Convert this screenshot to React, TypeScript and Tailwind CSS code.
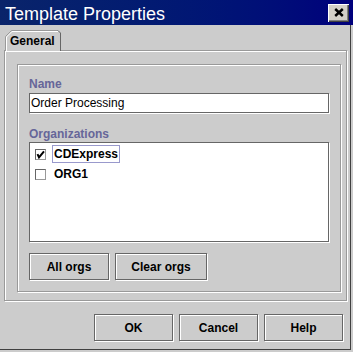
import type { ReactNode } from 'react';

function MetalButton({ children, className }: { children: ReactNode; className: string }) {
  return (
    <button
      className={`h-[27px] bg-[#cccccc] border border-[#666666] shadow-[inset_1px_1px_0_#fff,1px_1px_0_#fff] text-[12px] leading-none font-bold text-black ${className}`}
    >
      {children}
    </button>
  );
}

function Checkbox({ checked }: { checked?: boolean }) {
  return (
    <span className="w-[11px] h-[11px] shrink-0 bg-white border-t border-l border-[#666666] border-r border-b border-r-[#999999] border-b-[#999999] flex items-center justify-center">
      {checked && (
        <svg width="9" height="9" viewBox="0 0 9 9">
          <path d="M1.5 4.2 L3 7.4 L8 1.3" fill="none" stroke="#000" strokeWidth="2" />
        </svg>
      )}
    </span>
  );
}

function OrgRow({ name, checked, focused }: { name: string; checked?: boolean; focused?: boolean }) {
  return (
    <div className="h-[20px] flex items-center">
      <Checkbox checked={checked} />
      <span
        className={`ml-[6px] h-[18px] px-[1px] flex items-center border text-[12px] font-bold text-black ${
          focused ? 'border-[#9999cc]' : 'border-transparent'
        }`}
      >
        {name}
      </span>
    </div>
  );
}

export default function App() {
  return (
    <div className="w-[353px] h-[352px] bg-[#cccccc] flex flex-col overflow-hidden font-['Liberation_Sans',Arial,sans-serif] select-none">
      {/* Title bar */}
      <div className="h-[25px] shrink-0 flex items-center justify-between bg-linear-to-r from-[#0a246a] to-[#00007c] pl-[5px] pr-[4px]">
        <span className="text-white text-[18px] leading-none pt-[2px]">Template Properties</span>
        <button className="w-[21px] h-[18px] bg-[#d4d0c8] flex items-center justify-center shadow-[inset_1px_1px_0_#fff,inset_-1px_-1px_0_#404040,inset_-2px_-2px_0_#808080]">
          <svg width="10" height="9" viewBox="0 0 10 9">
            <path d="M1.2 1 L8.8 8 M8.8 1 L1.2 8" stroke="#000" strokeWidth="2.4" />
          </svg>
        </button>
      </div>

      {/* Body */}
      <div className="flex-1 flex flex-col mr-[2px] mb-[2px] border-r border-b border-[#404040]">
        {/* Tab strip */}
        <div className="pl-[5px] pt-[5px] flex">
          <div className="relative z-10 w-[56px] h-[21px] -mb-[1px] bg-[#cccccc] flex items-center pl-[5px] pt-[1px]">
            <svg className="absolute inset-0" width="56" height="21" viewBox="0 0 56 21">
              <path d="M0.5 21 V6.5 L6.5 0.5 H53" fill="none" stroke="#999999" />
              <path d="M53 0.5 L55.5 3 V21" fill="none" stroke="#666666" />
              <path d="M1.5 21 V7 L7 1.5 H53" fill="none" stroke="#ffffff" />
            </svg>
            <span className="relative text-[12px] font-bold text-black leading-none">General</span>
          </div>
        </div>

        {/* Tab panel */}
        <div className="ml-[4px] w-[343px] h-[251px] border border-[#999999] shadow-[inset_1px_1px_0_#fff,1px_1px_0_#fff] pt-[13px] pl-[12px]">
          <div className="w-[324px] h-[228px] border border-[#999999] shadow-[inset_1px_1px_0_#fff,1px_1px_0_#fff] px-[11px] pt-[12px] flex flex-col">
            <span className="text-[12px] leading-[14px] font-bold text-[#666699]">Name</span>
            <div className="mt-[2px] h-[20px] bg-white border border-[#666666] shadow-[1px_1px_0_#fff] flex items-center pl-[1px] text-[12px] text-black">
              Order Processing
            </div>

            <span className="mt-[14px] text-[12px] leading-[14px] font-bold text-[#666699]">Organizations</span>
            <div className="mt-[1px] h-[100px] bg-white border border-[#666666] shadow-[1px_1px_0_#fff] pt-[1px] pl-[5px]">
              <OrgRow name="CDExpress" checked focused />
              <OrgRow name="ORG1" />
            </div>

            <div className="mt-[11px] flex gap-[6px]">
              <MetalButton className="w-[80px]">All orgs</MetalButton>
              <MetalButton className="w-[92px]">Clear orgs</MetalButton>
            </div>
          </div>
        </div>

        {/* Dialog buttons */}
        <div className="mt-[13px] flex justify-end gap-[6px] pr-[7px]">
          <MetalButton className="w-[79px]">OK</MetalButton>
          <MetalButton className="w-[79px]">Cancel</MetalButton>
          <MetalButton className="w-[79px]">Help</MetalButton>
        </div>
      </div>
    </div>
  );
}
